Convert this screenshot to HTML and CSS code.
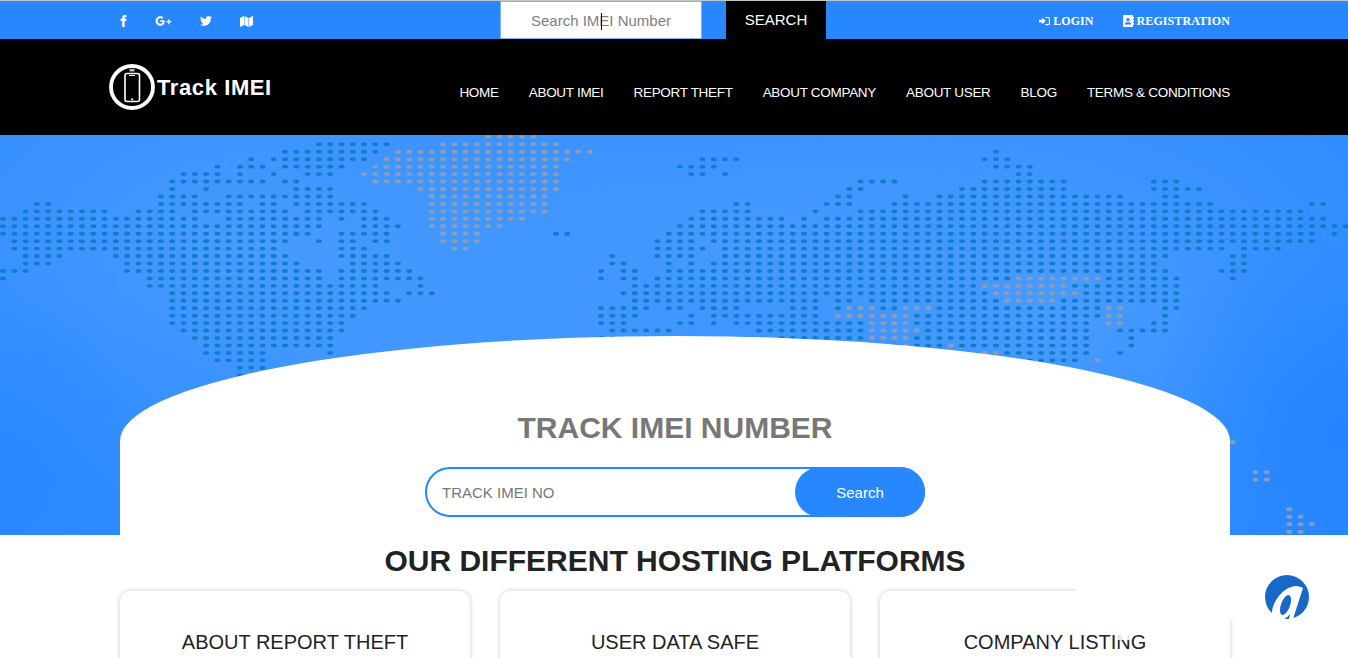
FILE: index.html
```html
<!DOCTYPE html>
<html lang="en">
<head>
  <meta charset="UTF-8">
  <title>Track IMEI</title>
  <link rel="stylesheet" href="styles.css">
</head>
<body>
<div class="page">

  <div class="topbar">
    <div class="wrap topbar-row">
      <div class="social">
        <svg class="ic-f" viewBox="6 2 12 22"><path d="M14 9h3.400l-.5 4H14v11H9.600V13H6.500V9h3.100V6.500C9.600 3.700 11.300 2 14 2h3.400v3.800h-2c-1 0-1.400.5-1.400 1.400z"/></svg>
        <svg class="ic-g" viewBox="0 0 32 19"><path d="M10 .5c2.500 0 4.500.9 6 2.400l-2.600 2.500C12.600 4.600 11.500 4.100 10 4.100c-2.800 0-4.900 2.400-4.900 5.400s2.100 5.400 4.900 5.400c2.900 0 4.200-1.900 4.500-3.400H10V8.200h8.100c.1.500.2 1 .2 1.600 0 5-3.300 8.700-8.300 8.700-5 0-9-4-9-9s4-9 9-9zM25 6h2.500v3.500H31V12h-3.500v3.500H25V12h-3.500V9.500H25z"/></svg>
        <svg class="ic-t" viewBox="0 2 24 20"><path d="M23.950 4.570a10 10 0 01-2.820.77 4.960 4.960 0 002.160-2.720c-.95.55-2 .95-3.120 1.170a4.920 4.920 0 00-8.380 4.480C7.690 8.100 4.070 6.130 1.640 3.160a4.820 4.820 0 00-.67 2.480c0 1.710.87 3.210 2.190 4.100a4.900 4.900 0 01-2.230-.62v.06a4.920 4.920 0 003.950 4.830 5 5 0 01-2.210.08 4.940 4.940 0 004.600 3.420A9.870 9.870 0 010 19.540a13.940 13.940 0 007.550 2.210c9.050 0 14-7.500 14-13.980 0-.21 0-.42-.02-.63a9.940 9.940 0 002.460-2.550z"/></svg>
        <svg class="ic-m" viewBox="0 0 26 22"><path d="M0 4l8-4v18l-8 4zM9 0l8 4v18l-8-4zM18 4l8-4v18l-8 4z"/></svg>
      </div>

      <div class="top-search">
        <div class="top-input-box">
          <input class="top-input" placeholder="Search IMEI Number">
          <span class="caret"></span>
        </div>
        <a class="top-btn" href="#">SEARCH</a>
      </div>

      <div class="account">
        <a href="#">
          <svg class="ic-login" viewBox="0 0 24 20"><path d="M0 7h7V3l8 7-8 7v-4H0zM14 1h6c2.200 0 4 1.800 4 4v10c0 2.200-1.800 4-4 4h-6v-2.500h6c.8 0 1.500-.7 1.500-1.500V5c0-.8-.7-1.500-1.500-1.500h-6z"/></svg>
          LOGIN
        </a>
        <a href="#">
          <svg class="ic-reg" viewBox="0 0 22 24"><path fill-rule="evenodd" d="M2 0h16c1.100 0 2 .9 2 2v2h2v4h-2v2h2v4h-2v2h2v4h-2v2c0 1.100-.9 2-2 2H2c-1.100 0-2-.9-2-2V2C0 .9.900 0 2 0zM10 6a3.500 3.500 0 100 7 3.500 3.500 0 000-7zM4 19h12v-1.500c0-1.700-1.500-3-3-3H7c-1.500 0-3 1.300-3 3z"/></svg>
          REGISTRATION
        </a>
      </div>
    </div>
  </div>

  <div class="navbar">
    <div class="wrap navbar-row">
      <a class="logo" href="#">
        <svg class="logo-mark" viewBox="0 0 46 46">
          <circle cx="23" cy="23" r="21" fill="none" stroke="#fff" stroke-width="3.800"/>
          <rect x="16" y="9.500" width="14.500" height="28" rx="2" fill="none" stroke="#fff" stroke-width="1.600"/>
          <rect x="20.500" y="5" width="5" height="2.500" fill="#bbb"/>
          <rect x="20" y="11" width="6" height="1" fill="#fff"/>
          <circle cx="23.200" cy="35.300" r="1.100" fill="#fff"/>
        </svg>
        <span class="logo-text">Track IMEI</span>
      </a>
      <ul class="menu">
        <li><a href="#">HOME</a></li>
        <li><a href="#">ABOUT IMEI</a></li>
        <li><a href="#">REPORT THEFT</a></li>
        <li><a href="#">ABOUT COMPANY</a></li>
        <li><a href="#">ABOUT USER</a></li>
        <li><a href="#">BLOG</a></li>
        <li><a href="#">TERMS &amp; CONDITIONS</a></li>
      </ul>
    </div>
  </div>

  <div class="hero">
    <svg class="dots" width="1348" height="400">
      <g transform="translate(-2.640 9.300) scale(11.283 7.450)" fill="none" stroke-width=".52" stroke-linecap="round" stroke-dasharray="0 1" stroke-dashoffset="-.5">
        <path stroke="#0f7ec6" d="M28 0H35M25 1H34M88 1H89
          M22 2H23M24 2H33M62 2H66M87 2H90
          M19 3H20M21 3H24M25 3H31M60 3H64M88 3H92
          M16 4H20M21 4H22M24 4H25M27 4H30M61 4H63M64 4H65M90 4H92
          M15 5H24M25 5H27M76 5H80M87 5H95M102 5H105
          M15 6H16M18 6H19M26 6H30M75 6H77M85 6H95M102 6H107
          M14 7H18M20 7H30M74 7H76M80 7H81M83 7H100M103 7H105
          M3 8H5M14 8H22M23 8H25M26 8H33M65 8H67M73 8H76M79 8H108M116 8H118
          M2 9H10M12 9H16M17 9H26M27 9H34M62 9H67M72 9H73M76 9H116
          M0 10H18M20 10H29M30 10H31M32 10H35M61 10H70M71 10H72M73 10H118
          M0 11H29M32 11H36M60 11H120
          M0 12H28M30 12H35M49 12H51M59 12H117M118 12H119
          M1 13H26M28 13H29M30 13H32M33 13H35M58 13H62M63 13H117
          M1 14H25M30 14H33M58 14H63M64 14H109M110 14H114
          M2 15H6M10 15H26M30 15H35M54 15H55M58 15H62M64 15H104M109 15H111
          M2 16H5M11 16H27M31 16H36M54 16H56M59 16H60M61 16H62M63 16H103M109 16H111
          M0 17H3M11 17H29M30 17H37M53 17H54M55 17H57M59 17H104M108 17H111
          M0 18H1M13 18H29M30 18H38M53 18H54M55 18H57M58 18H90M98 18H105M109 18H110
          M13 19H34M37 19H38M56 19H87M95 19H105
          M15 20H35M36 20H39M55 20H88M96 20H105
          M15 21H36M56 21H73M74 21H76M77 21H89M94 21H105
          M15 22H33M53 22H58M59 22H61M62 22H66M70 22H73M74 22H75M78 22H80M83 22H98M103 22H105
          M15 23H32M53 23H57M61 23H62M63 23H73M81 23H98M103 23H104
          M15 24H31M53 24H56M60 24H62M63 24H64M65 24H77M81 24H97M102 24H104
          M16 25H31M54 25H60M67 25H77M82 25H97M99 25H104
          M17 26H30M53 26H61M69 26H77M81 26H97M100 26H101
          M18 27H30M79 27H84M85 27H97M100 27H101
          M18 28H24M29 28H30M89 28H97M99 28H100
          M19 29H24M91 29H96
          M21 30H24M21 31H22"/>
        <path stroke="#8e9db4" d="M43 -1H48M39 0H50M35 1H53M34 2H51M33 3H50M32 4H50M33 5H50
          M37 6H50M38 7H49M38 8H49M38 9H49M38 10H47M38 11H45M39 12H43M39 13H43M40 14H42
          M90 18H98M87 19H95M88 20H96M89 21H94
          M75 22H78M80 22H83M98 22H100M74 23H81M98 23H100M77 24H81M98 24H100
          M77 25H82M77 26H81M80 27H81M84 27H85M87 28H89M97 29H98
          M109 40H110M111 44H113M111 45H113M114 49H115M114 50H116M114 51H117M114 52H116"/>
      </g>
    </svg>

    <div class="wrap hero-inner">
      <div class="track-panel">
        <h1 class="track-title">TRACK IMEI NUMBER</h1>
        <div class="track-form">
          <input class="track-input" placeholder="TRACK IMEI NO">
          <a class="track-btn" href="#">Search</a>
        </div>
      </div>
    </div>
  </div>

  <div class="wrap platforms">
    <h2 class="platforms-title">OUR DIFFERENT HOSTING PLATFORMS</h2>
    <div class="cards">
      <div class="card"><h3>ABOUT REPORT THEFT</h3></div>
      <div class="card"><h3>USER DATA SAFE</h3></div>
      <div class="card"><h3>COMPANY LISTING</h3></div>
    </div>
  </div>

  <div class="smear"></div>
  <div class="smear-text"></div>

  <svg class="chat" viewBox="0 0 48 48">
    <circle cx="24" cy="24" r="22" fill="#1769c9"/>
    <path fill="#fff" d="M40 15L30 46h-4l1-5c-3 4-7 6-11 6-5 0-8-3-7-8C10 28 20 14 33 13c3 0 5 1 7 2z"/>
    <ellipse cx="22.500" cy="32" rx="4.500" ry="10.500" transform="rotate(20 22.500 32)" fill="#1769c9"/>
  </svg>
</div>
</body>
</html>
```

FILE: styles.css
```css
* {
  box-sizing: border-box;
}

html, body {
  margin: 0;
  padding: 0;
}

body {
  background-color: #fff;
  color: #222;
  font-family: "Liberation Sans", Arial, sans-serif;
}

a {
  color: inherit;
  text-decoration: none;
}

.page {
  position: relative;
  height: 100vh;
  overflow: hidden;
}

.wrap {
  width: 1110px;
  margin-left: 120px;
}

/* top bar */
.topbar {
  height: 39px;
  background-color: #2787ff;
  border-top: 1px solid #c4c4c4;
}

.topbar-row {
  display: flex;
  align-items: center;
  height: 38px;
}

.social {
  display: flex;
  align-items: center;
  gap: 28px;
  width: 380px;
  padding-top: 2px;
}

.social svg {
  fill: #fff;
  display: block;
}

.ic-f {
  width: 7px;
  height: 12px;
}

.ic-g {
  width: 17px;
  height: 10px;
}

.ic-t {
  width: 12px;
  height: 10px;
}

.ic-m {
  width: 13px;
  height: 11px;
}

.top-search {
  display: flex;
  align-items: stretch;
  height: 38px;
  gap: 24px;
}

.top-input-box {
  position: relative;
  width: 202px;
}

.top-input {
  width: 100%;
  height: 100%;
  border: 1px solid #7fb1f5;
  background-color: #fff;
  font-family: inherit;
  font-size: 15px;
  text-align: center;
  outline: none;
}

.top-input::placeholder {
  color: #808080;
  opacity: 1;
}

.caret {
  position: absolute;
  left: 101px;
  top: 12px;
  width: 1px;
  height: 17px;
  background-color: #000;
}

.top-btn {
  width: 100px;
  background-color: #000;
  color: #fff;
  font-size: 15px;
  line-height: 38px;
  text-align: center;
}

.account {
  display: flex;
  align-items: center;
  gap: 29px;
  margin-left: auto;
  padding-top: 2px;
  font-family: "Liberation Serif", serif;
  font-size: 12px;
  font-weight: bold;
  letter-spacing: .08px;
  color: #fff;
}

.account a {
  display: flex;
  align-items: center;
  gap: 3px;
}

.account svg {
  fill: #fff;
  display: block;
}

.ic-login {
  width: 11px;
  height: 10px;
}

.ic-reg {
  width: 11px;
  height: 12px;
}

/* nav */
.navbar {
  height: 96px;
  background-color: #000;
}

.navbar-row {
  display: flex;
  align-items: center;
  justify-content: space-between;
  height: 96px;
}

.logo {
  display: flex;
  align-items: center;
  margin-left: -11px;
  color: #fff;
}

.logo-mark {
  width: 46px;
  height: 46px;
  display: block;
}

.logo-text {
  margin-left: 2px;
  font-size: 22px;
  font-weight: bold;
  letter-spacing: .6px;
  position: relative;
  top: 1px;
}

.menu {
  display: flex;
  gap: 30px;
  list-style: none;
  margin: 10px 0 0;
  padding: 0;
  color: #fff;
  font-size: 13.5px;
  letter-spacing: -.3px;
}

/* hero */
.hero {
  position: relative;
  height: 400px;
  overflow: hidden;
  background-color: #2f8bff;
  background-image:
    radial-gradient(ellipse 190px 230px at 1340px 300px, #2383ff 0%, rgba(35, 131, 255, 0) 100%),
    radial-gradient(ellipse 160px 200px at 0 340px, #2a87ff 0%, rgba(42, 135, 255, 0) 100%),
    radial-gradient(ellipse 460px 260px at 260px 110px, #489bff 0%, rgba(72, 155, 255, 0) 100%),
    radial-gradient(ellipse 440px 230px at 740px 110px, #4699ff 0%, rgba(70, 153, 255, 0) 100%),
    radial-gradient(ellipse 400px 280px at 1050px 170px, #489bff 0%, rgba(72, 155, 255, 0) 100%),
    radial-gradient(ellipse 320px 240px at 480px 290px, #4399ff 0%, rgba(67, 153, 255, 0) 100%);
}

.dots {
  position: absolute;
  left: 0;
  top: 0;
}

.hero-inner {
  position: relative;
  height: 100%;
  display: flex;
  align-items: flex-end;
}

.track-panel {
  width: 100%;
  height: 199px;
  background-color: #fff;
  border-radius: 50% 50% 0 0 / 105px 105px 0 0;
  padding-top: 73px;
  text-align: center;
}

.track-title {
  margin: 0;
  font-size: 30px;
  line-height: 37px;
  font-weight: bold;
  color: #777;
}

.track-form {
  display: flex;
  width: 500px;
  height: 50px;
  margin: 21px auto 0;
  border-radius: 25px;
  border: 2px solid #2787ff;
}

.track-input {
  flex: 1;
  min-width: 0;
  border: 0;
  outline: none;
  background: none;
  padding: 0 0 0 15px;
  font-family: inherit;
  font-size: 15px;
}

.track-input::placeholder {
  color: #777;
  opacity: 1;
}

.track-btn {
  width: 130px;
  margin: -2px -2px -2px 0;
  background-color: #2787ff;
  color: #fff;
  border-radius: 25px;
  font-size: 15px;
  line-height: 51px;
  text-align: center;
}

/* platforms */
.platforms-title {
  margin: 0;
  padding-top: 7px;
  font-size: 30px;
  line-height: 37px;
  font-weight: bold;
  color: #222;
  text-align: center;
}

.cards {
  display: grid;
  grid-template-columns: repeat(3, 350px);
  gap: 30px;
  margin-top: 12px;
}

.card {
  height: 220px;
  padding-top: 38px;
  background-color: #fff;
  border-radius: 10px;
  box-shadow: 0 0 5px rgba(0, 0, 0, .22);
  text-align: center;
}

.card h3 {
  margin: 0;
  font-size: 20px;
  line-height: 26px;
  font-weight: normal;
  color: #222;
}

/* chat widget */
.smear {
  position: absolute;
  left: 1076px;
  top: 584px;
  width: 158px;
  height: 36px;
  background-color: #fff;
}

.smear-text {
  position: absolute;
  left: 1117px;
  top: 632px;
  width: 15px;
  height: 8px;
  background-color: rgba(255, 255, 255, .85);
}

.chat {
  position: absolute;
  left: 1263px;
  top: 573px;
  width: 48px;
  height: 48px;
}
```
